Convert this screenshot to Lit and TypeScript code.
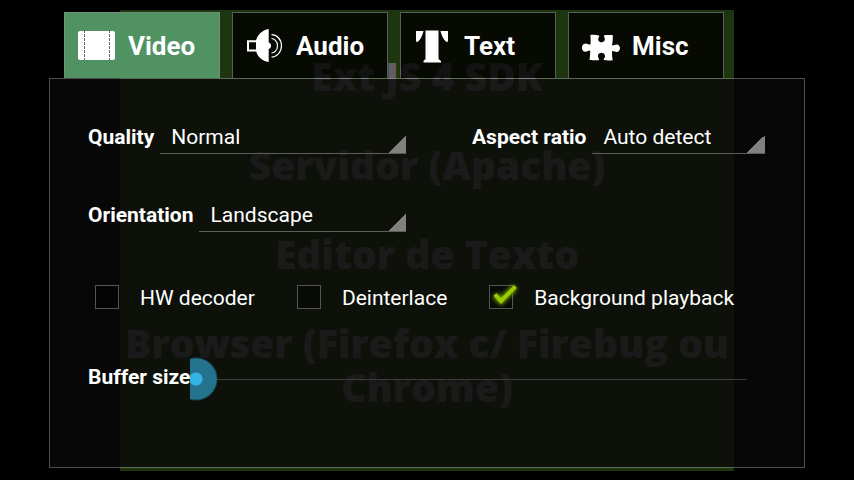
import { LitElement, html, css, svg } from "lit";
import { customElement, state } from "lit/decorators.js";
import { classMap } from "lit/directives/class-map.js";

const icons = {
  video: svg`<rect x="1" y="5" width="37" height="29" rx="2" fill="#fff"/>
    <path d="M7.500 4v30M32.500 4v30" stroke="#666" stroke-dasharray="3 1"/>`,
  audio: svg`<path d="M13 15.300H3v9.200h10" fill="none" stroke="#fff" stroke-width="2"/>
    <path fill="#fff" d="M11 14.500C12.500 9 17 4 23.700 3v13.500c3.200.4 3.200 6.100 0 6.500V36C17 35 12.500 30.500 11 25z"/>
    <path fill="none" stroke="#fff" stroke-width="1.200" d="M26.500 12.500c2.500 0 6 2.500 6 7.200s-3.500 7.300-6 7.300M26.500 8.700c5 0 10 4.500 10 11s-5 11.300-10 11.300"/>`,
  text: svg`<path fill="#fff" d="M3 5h7.500C9.500 9 7.500 14 4.500 16L3 15.500zM12.500 4.500h13V33l2.500 2v1.500H10.500V35l2-2zM27.500 5H35v10.500l-1.500.5C30.500 14 28.500 9 27.500 5z"/>`,
  misc: svg`<path fill="#fff" d="M9.300 9c3-.3 6-.2 8.600.4.900 1.200-.7 2-.7 3.800 0 4.200 6.600 4.200 6.700.1 0-1.800-1.600-2.700-.7-4 2.800-.5 5.700-.5 8.500-.2.300 3.200 0 6.400-.6 9.800 1 1.600 2.200-.4 4.400-.4 4.600 0 4.600 7.400.1 7.500-2.200 0-3.300-1.800-4.500-.5-.4 3 .3 6 .6 8.800-3 .4-6 .4-8.800-.2-.9-1.300 1.200-2.200 1.100-4.100-.2-4.400-6.900-4.300-7.100 0 0 1.900 1.700 2.900.9 4.200-3 .4-6.300 0-9.300-.5.500-3 .8-5.900.6-8.700-1.100-1.500-2.200.8-4.600.7-4.800-.1-4.800-8.100.1-8.200 2.400 0 3.700 2 4.900.6.300-3.200.2-6-.2-9.100z"/>`,
};

type TabId = keyof typeof icons;

const tabs: { id: TabId; label: string }[] = [
  { id: "video", label: "Video" },
  { id: "audio", label: "Audio" },
  { id: "text", label: "Text" },
  { id: "misc", label: "Misc" },
];

const fields = [
  { id: "quality", label: "Quality", options: ["Normal", "High", "Low"] },
  { id: "aspect", label: "Aspect ratio", options: ["Auto detect", "4:3", "16:9"] },
  { id: "orientation", label: "Orientation", options: ["Landscape", "Portrait"] },
];

const toggles = [
  { label: "HW decoder", on: false },
  { label: "Deinterlace", on: false },
  { label: "Background playback", on: true },
];

const slideLines = [
  "Ext JS 4 SDK",
  "Servidor (Apache)",
  "Editor de Texto",
  "Browser (Firefox c/ Firebug ou Chrome)",
];

@customElement("app-root")
export class AppRoot extends LitElement {
  @state() private active: TabId = "video";

  static styles = css`
    :host {
      display: block;
      position: relative;
      min-height: 100vh;
      background: #000;
      color: #fff;
      font: 21px/26px Roboto, sans-serif;
    }
    * {
      box-sizing: border-box;
    }
    /* the paused video shows through the settings dialog */
    .slide {
      position: absolute;
      inset: 10px 120px 9px;
      padding-top: 44px;
      overflow: hidden;
      background: #1e360f;
      color: #605e62;
      font: 900 39px/44px "Open Sans", Lato, sans-serif;
      text-align: center;
    }
    .slide p {
      margin: 0 0 45px;
    }
    .dialog {
      position: relative;
      display: flex;
      flex-direction: column;
      min-height: 100vh;
      padding: 12px 49px;
    }
    .tabs {
      display: flex;
      gap: 12px;
      padding: 0 15px;
    }
    .tab {
      display: flex;
      align-items: center;
      gap: 11px;
      width: 156px;
      height: 66px;
      padding: 0 12px;
      border: 1px solid rgba(190, 200, 190, 0.45);
      border-bottom: 0;
      background: rgba(0, 0, 0, 0.8);
      color: inherit;
      font: bold 26px/30px Roboto, sans-serif;
    }
    .tab.active {
      border-color: #71907a;
      background: #509262;
    }
    .tab svg {
      flex: none;
      width: 40px;
      height: 40px;
    }
    .panel {
      flex: 1;
      padding: 39px 39px 0 38px;
      border: 1px solid rgba(170, 170, 170, 0.45);
      background: rgba(9, 9, 9, 0.8);
      background-clip: padding-box;
    }
    .fields {
      display: grid;
      grid-template-columns: 318fr 293fr;
      gap: 42px 66px;
    }
    .field {
      display: flex;
      align-items: center;
      gap: 6px;
    }
    .name {
      font-weight: bold;
    }
    .field .name {
      padding-top: 2px;
    }
    select {
      flex: 1;
      min-width: 0;
      height: 36px;
      padding: 3px 20px 0 11px;
      border: 0;
      border-bottom: 1px solid #5b5d59;
      border-radius: 0;
      appearance: none;
      background: linear-gradient(135deg, transparent 50%, #80817f 50%) right
        bottom / 18px 18px no-repeat;
      color: inherit;
      font: inherit;
    }
    option {
      background: #111;
    }
    .toggles {
      display: flex;
      gap: 42px;
      margin: 51px 0 0 7px;
    }
    .toggle {
      display: flex;
      align-items: center;
      gap: 21px;
      white-space: nowrap;
    }
    .caption {
      padding-top: 2px;
    }
    .box {
      position: relative;
      display: grid;
      width: 24px;
      height: 24px;
    }
    .box input {
      width: 24px;
      height: 24px;
      margin: 0;
      border: 1px solid #555;
      appearance: none;
      background: rgba(0, 0, 0, 0.4);
    }
    .box svg {
      position: absolute;
      inset: -6px -10px auto auto;
      width: 40px;
      height: 36px;
      pointer-events: none;
      visibility: hidden;
    }
    .box input:checked + svg {
      visibility: visible;
    }
    .buffer {
      display: flex;
      align-items: center;
      margin: 46px 18px 0 0;
    }
    .buffer .name {
      padding-bottom: 4px;
    }
    .buffer input {
      flex: 1;
      min-width: 0;
      height: 44px;
      margin: 0;
      appearance: none;
      background: linear-gradient(#3c3e3b, #3c3e3b) center / 100% 1px no-repeat;
    }
    .buffer input::-webkit-slider-thumb {
      appearance: none;
      width: 28px;
      height: 44px;
      background: radial-gradient(
        circle at 6px 50%,
        #33b5e5 6px,
        #24738e 7px,
        #24738e 20px,
        transparent 22px
      );
    }
  `;

  render() {
    return html`
      <div class="slide">${slideLines.map((line) => html`<p>${line}</p>`)}</div>
      <main class="dialog">
        <div class="tabs" role="tablist">
          ${tabs.map(
            ({ id, label }) => html`
              <button
                role="tab"
                aria-selected=${this.active === id}
                class=${classMap({ tab: true, active: this.active === id })}
                @click=${() => (this.active = id)}
              >
                <svg viewBox="0 0 40 40" aria-hidden="true">${icons[id]}</svg>
                ${label}
              </button>
            `,
          )}
        </div>
        <section class="panel" role="tabpanel">
          <div class="fields">
            ${fields.map(
              ({ id, label, options }) => html`
                <div class="field">
                  <label class="name" for=${id}>${label}</label>
                  <select id=${id}>
                    ${options.map((option) => html`<option>${option}</option>`)}
                  </select>
                </div>
              `,
            )}
          </div>
          <div class="toggles">
            ${toggles.map(
              ({ label, on }) => html`
                <label class="toggle">
                  <span class="box">
                    <input type="checkbox" ?checked=${on} />
                    <svg viewBox="0 0 40 36" aria-hidden="true">
                      <defs>
                        <filter id="glow" x="-50%" y="-50%" width="200%" height="200%">
                          <feGaussianBlur stdDeviation="2" />
                        </filter>
                      </defs>
                      <path d="M12 16l6 6L32 8" fill="none" stroke="#7fae00" stroke-width="6" filter="url(#glow)" />
                      <path d="M12 15.500l6 6.500L32.500 7.500" fill="none" stroke="#99cc00" stroke-width="4" />
                    </svg>
                  </span>
                  <span class="caption">${label}</span>
                </label>
              `,
            )}
          </div>
          <div class="buffer">
            <label class="name" for="buffer">Buffer size</label>
            <input id="buffer" type="range" min="0" max="100" value="0" />
          </div>
        </section>
      </main>
    `;
  }
}
